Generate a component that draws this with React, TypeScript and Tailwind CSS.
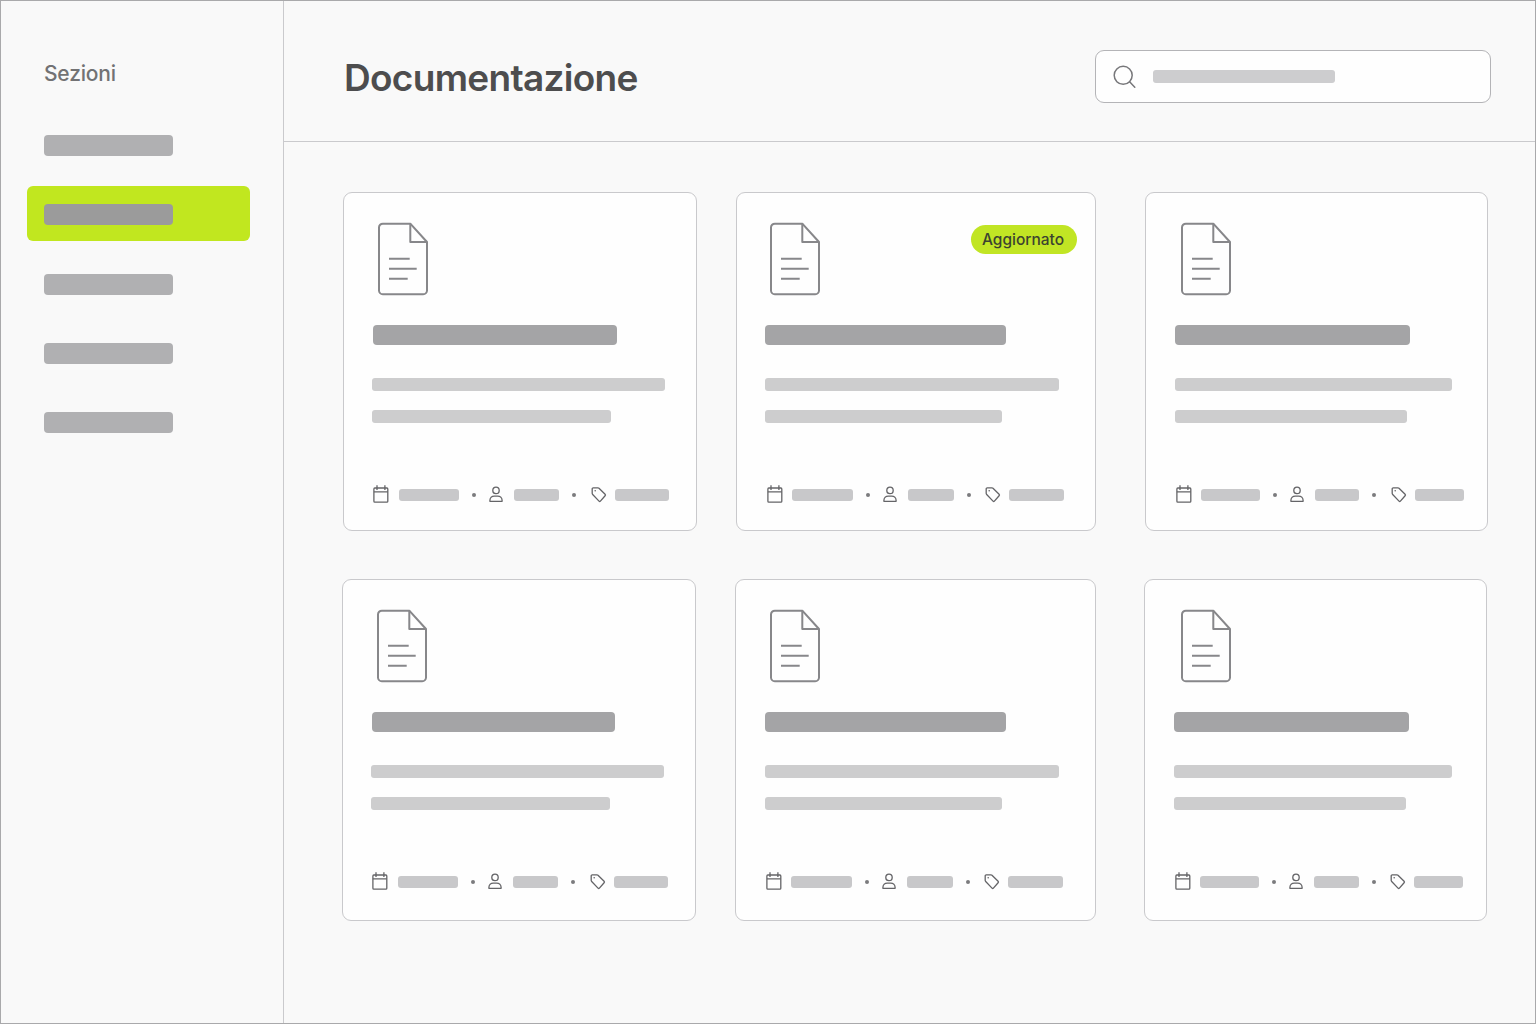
import React from 'react';

interface DocCard {
    id: number;
    card: string;
    icon: string;
    title: string;
    lineOne: string;
    lineTwo: string;
    meta: string;
    badge?: string;
}

// column widths differ a little from card to card
const topRow: DocCard[] = [
    {
        id: 1,
        card: 'w-[354px] pl-[28px]',
        icon: 'ml-[6px]',
        title: 'ml-px w-[244px]',
        lineOne: 'w-[293px]',
        lineTwo: 'w-[239px]',
        meta: 'grid-cols-[27px_60px_29px_26px_45px_30px_26px_54px]',
    },
    {
        id: 2,
        card: 'ml-[39px] w-[360px] pl-[28px]',
        icon: 'ml-[5px]',
        title: 'w-[241px]',
        lineOne: 'w-[294px]',
        lineTwo: 'w-[237px]',
        meta: 'ml-px grid-cols-[26px_61px_29px_26px_46px_29px_26px_55px]',
        badge: 'Aggiornato',
    },
    {
        id: 3,
        card: 'ml-[49px] w-[343px] pl-[29px]',
        icon: 'ml-[6px]',
        title: 'w-[235px]',
        lineOne: 'w-[277px]',
        lineTwo: 'w-[232px]',
        meta: 'grid-cols-[26px_59px_29px_26px_44px_30px_26px_49px]',
    },
];

const bottomRow: DocCard[] = [
    {
        id: 4,
        card: 'w-[354px] pl-[28px]',
        icon: 'ml-[6px]',
        title: 'ml-px w-[243px]',
        lineOne: 'w-[293px]',
        lineTwo: 'w-[239px]',
        meta: 'grid-cols-[27px_60px_29px_26px_45px_30px_26px_54px]',
    },
    {
        id: 5,
        card: 'ml-[39px] w-[361px] pl-[29px]',
        icon: 'ml-[5px]',
        title: 'w-[241px]',
        lineOne: 'w-[294px]',
        lineTwo: 'w-[237px]',
        meta: 'grid-cols-[26px_61px_29px_26px_46px_29px_26px_55px]',
    },
    {
        id: 6,
        card: 'ml-[48px] w-[343px] pl-[29px]',
        icon: 'ml-[7px]',
        title: 'w-[235px]',
        lineOne: 'w-[278px]',
        lineTwo: 'w-[232px]',
        meta: 'grid-cols-[26px_59px_29px_26px_45px_29px_26px_49px]',
    },
];

const DocIcon: React.FC<{ className?: string }> = ({ className }) => (
    <svg className={`block ${className}`} width="52" height="74" viewBox="0 0 52 74" fill="none" stroke="#87878a" strokeWidth="2" strokeLinejoin="round">
        <path d="M32.300 1.700H4.800a3.800 3.800 0 0 0-3.800 3.800V68.400a3.800 3.800 0 0 0 3.800 3.800H45.200a3.800 3.800 0 0 0 3.800-3.800V20Z" />
        <path d="M32.300 1.700V20H49" />
        <path d="M11 36.700H31.700M11 46.700H38.700M11 56.700H29.700" />
    </svg>
);

const CalendarIcon = () => (
    <svg width="18" height="20" viewBox="0 -0.3 18 20" fill="none" stroke="#646467" strokeWidth="1.3">
        <rect x="1.900" y="3.700" width="13.900" height="14.100" rx="0.900" />
        <path d="M1.900 7.600H15.800M5 1V5.600M12.900 1V5.600" />
    </svg>
);

const PersonIcon = () => (
    <svg width="18" height="20" viewBox="0 -0.3 18 20" fill="none" stroke="#646467" strokeWidth="1.3" strokeLinejoin="round">
        <circle cx="8" cy="6.100" r="3.200" />
        <path d="M1.900 17v-.8c0-2.600 2-4.400 4.400-4.400h3.400c2.400 0 4.400 1.800 4.400 4.400v.8Z" />
    </svg>
);

const TagIcon = () => (
    <svg width="20" height="20" viewBox="0 -0.3 20 20" fill="none" stroke="#646467" strokeWidth="1.3" strokeLinejoin="round">
        <path d="M3.200 4.500a1 1 0 0 1 1-1H9a1.500 1.500 0 0 1 1 .4L16.100 10a1 1 0 0 1 0 1.400L11.400 16.800a1 1 0 0 1-1.400 0L3.700 10.200a2 2 0 0 1-.5-1Z" />
        <circle cx="6.200" cy="6.500" r="0.800" fill="#646467" stroke="none" />
    </svg>
);

const Dot = () => <span className="mt-0.5 ml-[13px] block size-1 rounded-full bg-[#7b7b7e]" />;

const MetaBar = () => <span className="mt-0.5 block h-3 rounded-[3px] bg-[#c8c8ca]" />;

const Card: React.FC<{ doc: DocCard }> = ({ doc }) => (
    <article className={`shrink-0 rounded-[9px] border border-[#c9c9cc] bg-[#fefefe] pt-[29px] ${doc.card}`}>
        <div className="flex h-[74px] items-start justify-between">
            <DocIcon className={doc.icon} />
            {doc.badge && (
                <span className="mt-[3px] mr-[18px] flex h-[29px] w-[106px] items-center justify-center rounded-full bg-[#c1e524] pr-0.5 text-[15.500px] font-medium text-[#3c4330]">
                    {doc.badge}
                </span>
            )}
        </div>
        <div className={`mt-[29px] h-5 rounded-[4px] bg-[#a4a4a6] ${doc.title}`} />
        <div className={`mt-[33px] h-[13px] rounded-[3px] bg-[#cdcdce] ${doc.lineOne}`} />
        <div className={`mt-[19px] h-[13px] rounded-[3px] bg-[#cdcdce] ${doc.lineTwo}`} />
        <div className={`mt-[61px] grid h-5 items-center ${doc.meta}`}>
            <CalendarIcon />
            <MetaBar />
            <Dot />
            <PersonIcon />
            <MetaBar />
            <Dot />
            <TagIcon />
            <MetaBar />
        </div>
    </article>
);

const Sidebar = () => (
    <aside className="w-[283px] shrink-0 border-r border-[#cacacd] pt-[59px]">
        <h2 className="pl-[43px] text-[21px] leading-7 font-medium tracking-[-0.2px] text-[#727274]">Sezioni</h2>
        <nav className="mt-[29px] flex flex-col gap-[15px] pl-[26px]">
            {[0, 1, 2, 3, 4].map(item => (
                <div
                    key={item}
                    className={`flex w-[223px] items-center rounded-[6px] pl-[17px] ${item === 1 ? 'h-[55px] bg-[#c1e71f]' : 'h-[54px]'}`}
                >
                    <div className={`mt-0.5 h-[21px] w-[129px] rounded-[4px] ${item === 1 ? 'bg-[#9b9b9b]' : 'bg-[#b0b0b2]'}`} />
                </div>
            ))}
        </nav>
    </aside>
);

const Header = () => (
    <header className="flex h-[141px] items-start justify-between border-b border-[#cacacd] pr-[44px] pl-[60px]">
        <h1 className="mt-[53px] text-[37px] leading-[48px] font-semibold tracking-[-0.7px] text-[#4d4d4e]">Documentazione</h1>
        <div className="mt-[49px] flex h-[53px] w-[396px] items-center rounded-[9px] border border-[#b4b4b7] bg-[#fefefe] pl-4">
            <svg width="26" height="26" viewBox="0 0 26 26" fill="none" stroke="#77777a" strokeWidth="1.5" strokeLinecap="round">
                <circle cx="11.200" cy="11.300" r="9" />
                <path d="M17.600 17.800L22.800 23.300" />
            </svg>
            <div className="ml-[15px] h-[13px] w-[182px] rounded-[3px] bg-[#cdcdcf]" />
        </div>
    </header>
);

const App = () => (
    <div className="flex h-[1024px] w-[1536px] overflow-hidden border border-[#a9a9ab] bg-[#f9f9f9] font-['Inter',sans-serif]">
        <Sidebar />
        <div className="min-w-0 flex-1">
            <Header />
            <main className="pt-[50px]">
                <section className="flex h-[339px] pl-[59px]">
                    {topRow.map(doc => <Card key={doc.id} doc={doc} />)}
                </section>
                <section className="mt-12 flex h-[342px] pl-[58px]">
                    {bottomRow.map(doc => <Card key={doc.id} doc={doc} />)}
                </section>
            </main>
        </div>
    </div>
);

export default App;
